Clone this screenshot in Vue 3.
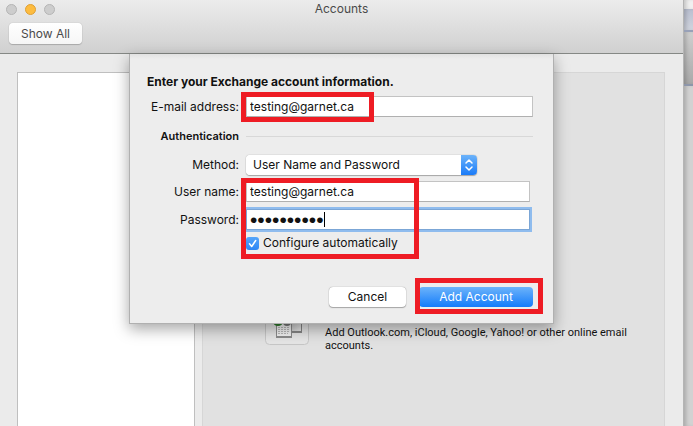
<script setup>
import { ref } from 'vue'

const email = ref('testing@garnet.ca')
const method = ref('User Name and Password')
const userName = ref('testing@garnet.ca')
const password = ref('garnet2016')
const automatic = ref(true)
</script>

<template>
  <div class="desktop">
    <main class="window">
      <header class="toolbar">
        <div class="titlebar">
          <div class="lights">
            <button class="light" type="button" aria-label="Close"></button>
            <button class="light amber" type="button" aria-label="Minimize"></button>
            <button class="light" type="button" aria-label="Zoom"></button>
          </div>
          <h1 class="title">Accounts</h1>
        </div>
        <button class="show-all" type="button">Show All</button>
      </header>

      <div class="content">
        <div class="panes">
          <div class="list"></div>
          <section class="detail">
            <div class="offer">
              <svg class="offer-icon" viewBox="0 0 44 44" aria-hidden="true">
                <defs>
                  <linearGradient id="screen" x1="0" y1="0" x2="1" y2="1">
                    <stop offset="0" stop-color="#bdbdbd" />
                    <stop offset="1" stop-color="#e8e8e8" />
                  </linearGradient>
                </defs>
                <rect x="0.5" y="0.5" width="43" height="43" rx="4" fill="#e5e5e5" stroke="#c6c6c6" />
                <rect x="26" y="12" width="11" height="20" fill="#858585" />
                <rect x="27" y="12" width="9" height="18" fill="url(#screen)" />
                <rect x="11" y="14" width="16" height="23" fill="#8c8c8c" />
                <rect x="12" y="14" width="14" height="21" fill="#f0f0f0" />
                <path d="M13 26.500h12M13 28.500h12M13 30.500h12M13 32.500h10" stroke="#b8b8b8" stroke-dasharray="2 1" />
                <ellipse cx="13" cy="21" rx="5" ry="4" fill="#2f7a2d" />
                <ellipse cx="22" cy="21" rx="4" ry="4" fill="#777" />
              </svg>
              <p class="offer-text">Add Outlook.com, iCloud, Google, Yahoo! or other online email accounts.</p>
            </div>
          </section>
        </div>

        <form class="sheet" @submit.prevent>
          <h2 class="heading">Enter your Exchange account information.</h2>

          <div class="row email-row">
            <label for="email">E-mail address:</label>
            <div class="field">
              <input id="email" v-model="email" class="text" type="text" />
              <span class="mark mark-email"></span>
            </div>
          </div>

          <div class="row section-row">
            <h3 class="section">Authentication</h3>
            <hr class="rule" />
          </div>

          <div class="row method-row">
            <label for="method">Method:</label>
            <div class="popup">
              <select id="method" v-model="method">
                <option>User Name and Password</option>
              </select>
              <svg class="arrows" viewBox="0 0 16 20" aria-hidden="true">
                <path d="M5 8l3-3 3 3M5 12l3 3 3-3" fill="none" stroke="#fff" stroke-width="1.500" stroke-linecap="round" stroke-linejoin="round" />
              </svg>
            </div>
          </div>

          <div class="credentials">
            <div class="row">
              <label for="user">User name:</label>
              <div class="field short">
                <input id="user" v-model="userName" class="text" type="text" />
              </div>
            </div>
            <div class="row">
              <label for="password">Password:</label>
              <div class="field short">
                <input id="password" v-model="password" class="text active" type="password" />
                <span class="caret"></span>
              </div>
            </div>
            <div class="row check-row">
              <label class="check">
                <input v-model="automatic" type="checkbox" />
                <svg class="tick" viewBox="0 0 13 13" aria-hidden="true">
                  <path v-if="automatic" d="M3.500 6.800l2.200 2.700 4-6" fill="none" stroke="#fff" stroke-width="1.500" stroke-linecap="round" stroke-linejoin="round" />
                </svg>
                <span>Configure automatically</span>
              </label>
            </div>
            <span class="mark mark-credentials"></span>
          </div>

          <div class="actions">
            <button class="cancel" type="button">Cancel</button>
            <div class="primary-wrap">
              <button class="primary" type="submit">Add Account</button>
              <span class="mark mark-primary"></span>
            </div>
          </div>
        </form>
      </div>
    </main>
    <aside class="behind">
      <div class="behind-title"></div>
      <div class="behind-tabs"></div>
      <div class="behind-ribbon"></div>
      <div class="behind-page"></div>
    </aside>
  </div>
</template>

<style>
body {
  background: #d2d2d2;
}
</style>

<style scoped>
.desktop,
.desktop * {
  box-sizing: border-box;
}

.desktop {
  display: flex;
  min-height: 100vh;
  font-family: Inter, "Liberation Sans", sans-serif;
  font-size: 12px;
  line-height: 16px;
  color: #111;
}

button,
input,
select {
  font: inherit;
  color: inherit;
  margin: 0;
}

h1,
h2,
h3,
p,
hr {
  margin: 0;
}

.window {
  flex: 1;
  min-width: 0;
  display: flex;
  flex-direction: column;
  background: #ebebeb;
}

.toolbar {
  height: 54px;
  background: linear-gradient(#ececec, #d0d0d0);
  border-bottom: 1px solid #858885;
}

.titlebar {
  display: grid;
  grid-template-columns: 1fr auto 1fr;
  align-items: center;
  height: 18px;
  padding: 0 6px;
}

.lights {
  display: flex;
  gap: 8px;
}

.light {
  width: 11px;
  height: 11px;
  padding: 0;
  border: 1px solid #b5b5b5;
  border-radius: 50%;
  background: #cdcdcd;
}

.amber {
  border-color: #dfa034;
  background: #fdbc40;
}

.title {
  font-size: 12px;
  font-weight: 400;
  color: #4a4a4a;
}

.show-all {
  display: block;
  width: 73px;
  height: 21px;
  margin: 5px 0 0 9px;
  padding: 0;
  border: 0;
  border-radius: 4px;
  background: linear-gradient(#fff, #f6f6f6);
  box-shadow: 0 0 1px #999, 0 1px 1px #aaa;
  color: #4a4a4a;
}

.content {
  flex: 1;
  display: grid;
  grid-template-columns: minmax(0, 1fr);
}

.panes,
.sheet {
  grid-area: 1 / 1;
}

.panes {
  display: flex;
  gap: 7px;
  padding: 18px 18px 0 17px;
}

.list {
  flex: 0 0 178px;
  background: #fff;
  border: 1px solid #bfbfbf;
  border-bottom: 0;
}

.detail {
  flex: 1;
  min-width: 0;
  padding: 228px 20px 0 62px;
  background: #e1e1e1;
  border: 1px solid #d6d6d6;
  border-bottom: 0;
}

.offer {
  display: flex;
  gap: 16px;
}

.offer-icon {
  flex: none;
  width: 44px;
  height: 44px;
}

.offer-text {
  padding-top: 25px;
  font-family: Roboto, "Liberation Sans", sans-serif;
  font-size: 11px;
  line-height: 13px;
}

.sheet {
  position: relative;
  justify-self: center;
  align-self: start;
  width: 425px;
  max-width: 100%;
  padding: 20px 20px 16px 17px;
  background: linear-gradient(#e2e2e2, #ededed 5px);
  border: solid #b0b0b0;
  border-width: 0 1px 1px;
  box-shadow: 0 5px 14px rgba(0, 0, 0, 0.35);
}

.heading {
  font-size: 12px;
  font-weight: 700;
  white-space: nowrap;
}

.row {
  display: grid;
  grid-template-columns: 92px minmax(0, 1fr);
  column-gap: 7px;
  align-items: center;
}

.row > label:not(.check),
.section {
  justify-self: end;
  white-space: nowrap;
}

.email-row {
  margin-top: 6px;
}

.field {
  position: relative;
}

.short {
  margin-right: 3px;
}

.text {
  display: block;
  width: 100%;
  height: 21px;
  padding: 0 3px;
  border: 1px solid #c3c3c3;
  border-bottom-color: #b0b0b0;
  border-radius: 0;
  background: #fff;
  outline: 0;
}

.active {
  border-color: #7ba6d6;
  box-shadow: 0 0 0 2px #8fbcee;
  font-family: "Liberation Sans", sans-serif;
  font-size: 21px;
}

.caret {
  position: absolute;
  top: 3px;
  left: 78px;
  width: 1px;
  height: 15px;
  background: #000;
}

.section-row {
  margin-top: 12px;
}

.section {
  font-size: 11px;
  line-height: 14px;
  font-weight: 600;
}

.rule {
  border: 0;
  border-top: 1px solid #d8d8d8;
}

.method-row {
  margin-top: 12px;
}

.popup {
  display: flex;
  width: 231px;
  height: 20px;
  overflow: hidden;
  border-radius: 4px;
  background: #fff;
  box-shadow: 0 0 1px #777, 0 1px 1px #aaa;
}

.popup select {
  flex: 1;
  min-width: 0;
  padding: 0 7px;
  border: 0;
  appearance: none;
  background: #fff;
}

.arrows {
  flex: none;
  width: 16px;
  height: 20px;
  background: linear-gradient(#6cb3fa, #1a7bf8);
}

.credentials {
  position: relative;
  display: grid;
  row-gap: 7px;
  margin-top: 6px;
}

.check-row {
  margin-top: -2px;
}

.check {
  grid-column: 2;
  display: flex;
  align-items: center;
  gap: 4px;
  position: relative;
}

.check input {
  appearance: none;
  width: 13px;
  height: 13px;
  border-radius: 3px;
  background: #fff;
}

.check input:checked {
  background: linear-gradient(#55a5fa, #2d86f5);
}

.tick {
  position: absolute;
  left: 0;
  width: 13px;
  height: 13px;
  pointer-events: none;
}

.actions {
  display: flex;
  justify-content: flex-end;
  gap: 13px;
  margin-top: 36px;
}

.cancel,
.primary {
  display: block;
  height: 20px;
  padding: 0;
  border: 0;
  border-radius: 4px;
}

.cancel {
  width: 77px;
  background: #fff;
  box-shadow: 0 0 1px #777, 0 1px 1px #aaa;
}

.primary-wrap {
  position: relative;
}

.primary {
  width: 114px;
  background: linear-gradient(#6cb3fa, #147cfb);
  color: #fff;
}

.mark {
  position: absolute;
  border: 5px solid #ee1c24;
  pointer-events: none;
}

.mark-email {
  top: -4px;
  left: -5px;
  width: 133px;
  height: 30px;
}

.mark-credentials {
  top: -3px;
  bottom: -8px;
  left: 94px;
  width: 178px;
}

.mark-primary {
  inset: -9px -10px -7px -4px;
}

.behind {
  flex: 0 0 10px;
  display: flex;
  flex-direction: column;
  border-left: 1px solid #b4b4b4;
}

.behind > * {
  box-shadow: inset 4px 0 4px -2px rgba(0, 0, 0, 0.2);
}

.behind-title {
  height: 9px;
  background: #f0f0f0;
}

.behind-tabs {
  height: 23px;
  background: linear-gradient(#b9bfd0, #d0d4de);
  border-bottom: 2px solid #98a1b8;
}

.behind-ribbon {
  height: 54px;
  background: linear-gradient(#cfcfcf, #a9a9a9);
  border-bottom: 2px solid #8d96aa;
}

.behind-page {
  flex: 1;
  background: #d2d2d2;
}
</style>
